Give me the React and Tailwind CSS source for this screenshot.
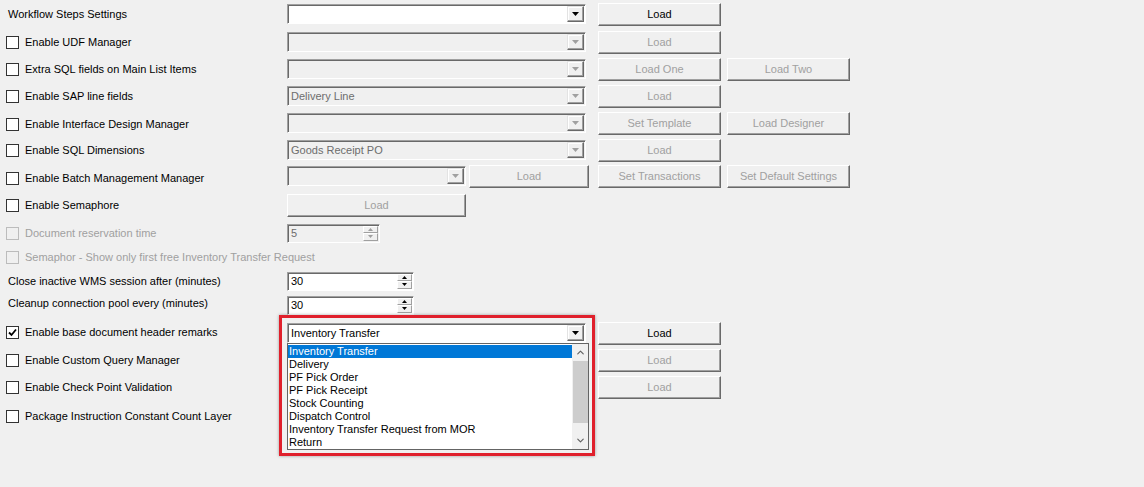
import { ChevronUp, ChevronDown } from 'lucide-react'

const FONT = { fontFamily: '"Liberation Sans", Arial, sans-serif' }

function Check({ checked, disabled }) {
  return (
    <span
      className={`w-[13px] h-[13px] shrink-0 border flex items-center justify-center ${
        disabled ? 'border-[#bcbcbc] bg-[#f0f0f0]' : 'border-[#333] bg-white'
      }`}
    >
      {checked && (
        <svg width="9" height="9" viewBox="0 0 9 9">
          <path d="M1 4.5 L3.5 7 L8 1.5" stroke="#000" strokeWidth="1.8" fill="none" />
        </svg>
      )}
    </span>
  )
}

function Label({ check, checked, disabled, className = '', children }) {
  return (
    <div className={`w-[287px] shrink-0 flex items-center whitespace-nowrap ${check ? 'pl-[6px]' : 'pl-[8px]'} ${className}`}>
      {check && <Check checked={checked} disabled={disabled} />}
      <span className={`${check ? 'ml-[6px]' : ''} ${disabled ? 'text-[#a0a0a0]' : 'text-black'}`}>{children}</span>
    </div>
  )
}

function Arrow({ enabled }) {
  return (
    <span className="w-[17px] h-[16px] shrink-0 bg-[#f0f0f0] border border-t-[#e3e3e3] border-l-[#e3e3e3] border-r-[#696969] border-b-[#696969] shadow-[inset_-1px_-1px_0_#a0a0a0,inset_1px_1px_0_#fff] flex items-center justify-center">
      <svg width="7" height="4" viewBox="0 0 7 4">
        <path d="M0 0 H7 L3.5 4 Z" fill={enabled ? '#000' : '#a0a0a0'} />
      </svg>
    </span>
  )
}

function Combo({ w, value, enabled, children }) {
  return (
    <div
      className={`relative ${w} h-[20px] shrink-0 flex items-center border border-t-[#a0a0a0] border-l-[#a0a0a0] border-r-white border-b-white shadow-[inset_1px_1px_0_#696969] pr-[1px] ${
        enabled ? 'bg-white' : 'bg-[#f0f0f0]'
      }`}
    >
      <span className={`flex-1 pl-[3px] pt-[1px] ${enabled ? 'text-black' : 'text-[#6d6d6d]'}`}>{value}</span>
      <Arrow enabled={enabled} />
      {children}
    </div>
  )
}

function Btn({ w = 'w-[123px]', enabled, children, className = '' }) {
  return (
    <div
      className={`${w} h-[23px] shrink-0 flex items-center justify-center bg-[#f0f0f0] border border-t-white border-l-white border-r-[#696969] border-b-[#696969] shadow-[inset_-1px_-1px_0_#a0a0a0] ${
        enabled ? 'text-black' : 'text-[#a0a0a0]'
      } ${className}`}
    >
      {children}
    </div>
  )
}

function Spin({ w, value, enabled }) {
  const tri = enabled ? '#000' : '#a0a0a0'
  return (
    <div
      className={`${w} h-[19px] shrink-0 flex border border-t-[#a0a0a0] border-l-[#a0a0a0] border-r-white border-b-white shadow-[inset_1px_1px_0_#696969] ${
        enabled ? 'bg-white text-black' : 'bg-[#f0f0f0] text-[#6d6d6d]'
      }`}
    >
      <span className="flex-1 pl-[3px] flex items-center">{value}</span>
      <div className="w-[16px] flex flex-col py-[1px] pr-[1px]">
        {[0, 1].map((i) => (
          <span
            key={i}
            className="flex-1 bg-[#f0f0f0] border border-t-white border-l-white border-r-[#a0a0a0] border-b-[#a0a0a0] flex items-center justify-center"
          >
            <svg width="5" height="3" viewBox="0 0 5 3">
              <path d={i === 0 ? 'M0 3 H5 L2.5 0 Z' : 'M0 0 H5 L2.5 3 Z'} fill={tri} />
            </svg>
          </span>
        ))}
      </div>
    </div>
  )
}

const LIST = [
  'Inventory Transfer',
  'Delivery',
  'PF Pick Order',
  'PF Pick Receipt',
  'Stock Counting',
  'Dispatch Control',
  'Inventory Transfer Request from MOR',
  'Return',
]

function DropList() {
  return (
    <div className="absolute left-[-1px] top-[19px] w-[302px] h-[107px] bg-white border border-[#646464] flex z-10">
      <div className="flex-1 flex flex-col pt-[1px]">
        {LIST.map((item, i) => (
          <div
            key={item}
            className={`h-[13px] leading-[13px] pl-[1px] whitespace-nowrap ${i === 0 ? 'bg-[#0078d7] text-white' : 'text-black'}`}
          >
            {item}
          </div>
        ))}
      </div>
      <div className="w-[16px] bg-[#f0f0f0] flex flex-col items-center">
        <span className="h-[17px] flex items-center justify-center text-[#606060]">
          <ChevronUp size={11} strokeWidth={2.5} />
        </span>
        <span className="w-[15px] h-[62px] bg-[#cdcdcd]" />
        <span className="flex-1" />
        <span className="h-[17px] flex items-center justify-center text-[#606060]">
          <ChevronDown size={11} strokeWidth={2.5} />
        </span>
      </div>
    </div>
  )
}

export default function App() {
  return (
    <div className="w-[1144px] h-[487px] bg-[#f0f0f0] text-[11px] pt-[2px] overflow-hidden" style={FONT}>
      <div className="flex items-center h-[24px]">
        <Label>Workflow Steps Settings</Label>
        <Combo w="w-[299px]" enabled />
        <Btn enabled className="ml-[12px]">Load</Btn>
      </div>

      <div className="flex items-center h-[24px] mt-[4px]">
        <Label check>Enable UDF Manager</Label>
        <Combo w="w-[299px]" />
        <Btn className="ml-[12px]">Load</Btn>
      </div>

      <div className="flex items-center h-[24px] mt-[3px]">
        <Label check>Extra SQL fields on Main List Items</Label>
        <Combo w="w-[299px]" />
        <Btn className="ml-[12px]">Load One</Btn>
        <Btn className="ml-[6px]">Load Two</Btn>
      </div>

      <div className="flex items-center h-[24px] mt-[3px]">
        <Label check>Enable SAP line fields</Label>
        <Combo w="w-[299px]" value="Delivery Line" />
        <Btn className="ml-[12px]">Load</Btn>
      </div>

      <div className="flex items-center h-[24px] mt-[3px]">
        <Label check className="pt-[2px]">Enable Interface Design Manager</Label>
        <Combo w="w-[299px]" />
        <Btn className="ml-[12px]">Set Template</Btn>
        <Btn className="ml-[6px]">Load Designer</Btn>
      </div>

      <div className="flex items-center h-[24px] mt-[3px]">
        <Label check>Enable SQL Dimensions</Label>
        <Combo w="w-[299px]" value="Goods Receipt PO" />
        <Btn className="ml-[12px]">Load</Btn>
      </div>

      <div className="flex items-center h-[24px] mt-[2px]">
        <Label check className="pt-[5px]">Enable Batch Management Manager</Label>
        <Combo w="w-[179px]" />
        <Btn w="w-[120px]" className="ml-[3px]">Load</Btn>
        <Btn className="ml-[9px]">Set Transactions</Btn>
        <Btn className="ml-[6px]">Set Default Settings</Btn>
      </div>

      <div className="flex items-center h-[24px] mt-[5px]">
        <Label check>Enable Semaphore</Label>
        <Btn w="w-[179px]">Load</Btn>
      </div>

      <div className="flex items-center h-[22px] mt-[5px]">
        <Label check disabled>Document reservation time</Label>
        <Spin w="w-[93px]" value="5" />
      </div>

      <div className="flex items-center h-[20px] mt-[3px]">
        <Label check disabled>Semaphor - Show only first free Inventory Transfer Request</Label>
      </div>

      <div className="flex items-center h-[20px] mt-[4px]">
        <Label>Close inactive WMS session after (minutes)</Label>
        <Spin w="w-[127px]" value="30" enabled />
      </div>

      <div className="flex items-center h-[20px] mt-[4px]">
        <Label className="pb-[4px]">Cleanup connection pool every (minutes)</Label>
        <Spin w="w-[127px]" value="30" enabled />
      </div>

      <div className="flex items-center h-[24px] mt-[6px]">
        <Label check checked className="pb-[2px]">Enable base document header remarks</Label>
        <div className="relative">
          <Combo w="w-[299px]" value="Inventory Transfer" enabled>
            <DropList />
          </Combo>
          <div className="absolute left-[-8px] top-[-8px] w-[316px] h-[141px] border-[3px] border-[#e0202c] shadow-[0_0_3px_rgba(0,0,0,0.35)] z-20 pointer-events-none" />
        </div>
        <Btn enabled className="ml-[12px]">Load</Btn>
      </div>

      <div className="flex items-center h-[24px] mt-[3px]">
        <Label check>Enable Custom Query Manager</Label>
        <Btn className="ml-[311px]">Load</Btn>
      </div>

      <div className="flex items-center h-[24px] mt-[3px]">
        <Label check>Enable Check Point Validation</Label>
        <Btn className="ml-[311px]">Load</Btn>
      </div>

      <div className="flex items-center h-[24px] mt-[5px]">
        <Label check>Package Instruction Constant Count Layer</Label>
      </div>
    </div>
  )
}
